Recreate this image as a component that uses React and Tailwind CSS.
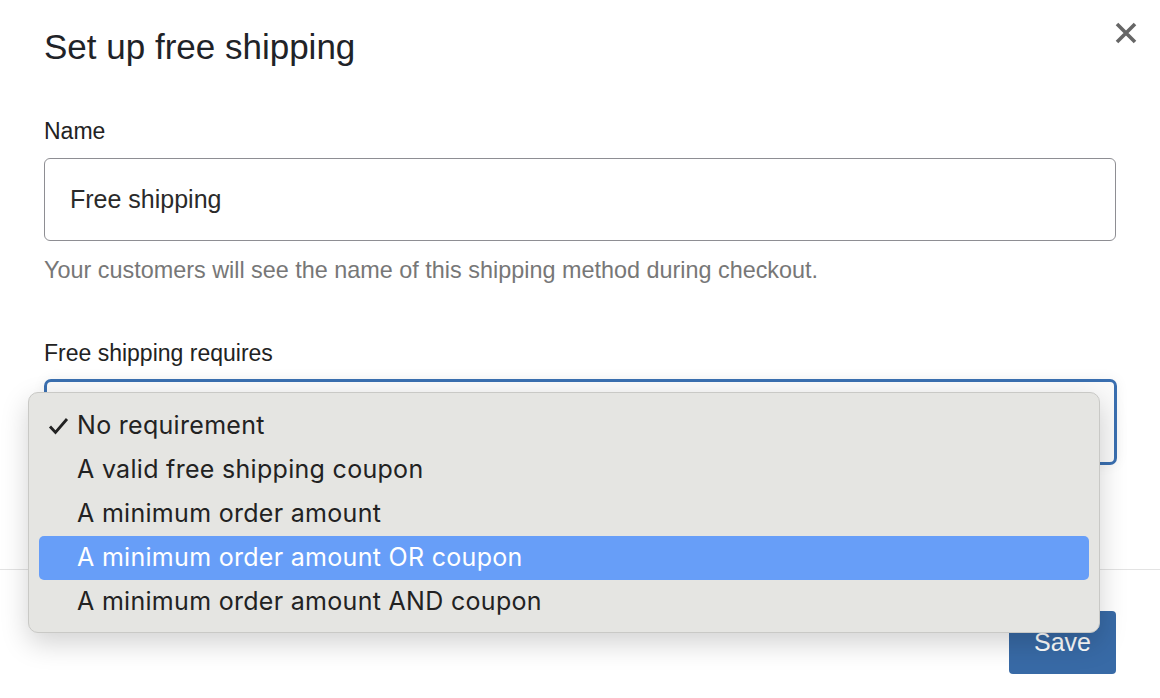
export default function App() {
  const options = [
    "No requirement",
    "A valid free shipping coupon",
    "A minimum order amount",
    "A minimum order amount OR coupon",
    "A minimum order amount AND coupon",
  ];
  const selected = 0;
  const highlighted = 3;

  return (
    <div className="relative w-[1160px] h-[698px] overflow-hidden bg-white font-['Liberation_Sans',Arial,sans-serif] text-[#222]">
      {/* header */}
      <div className="flex items-start justify-between pl-[44px] pr-[23px] pt-[27px]">
        <h1 className="text-[35px] leading-[40px] text-[#1f2328]">Set up free shipping</h1>
        <button className="mt-[-5px] p-0 text-[#666]">
          <svg width="22" height="22" viewBox="0 0 22 22">
            <path d="M2 2L20 20M20 2L2 20" stroke="#666" strokeWidth="3.6" strokeLinecap="butt" />
          </svg>
        </button>
      </div>

      {/* body */}
      <div className="px-[44px]">
        <label className="mt-[51px] block text-[23px] leading-[26px]">Name</label>
        <div className="mt-[14px] flex h-[83px] w-[1072px] items-center rounded-[6px] border-[1.5px] border-[#8e8e93] px-[25px] text-[25px] text-[#2a2a2a]">
          Free shipping
        </div>
        <p className="mt-[16px] text-[23.4px] leading-[26px] text-[#777]">
          Your customers will see the name of this shipping method during checkout.
        </p>

        <label className="mt-[57px] block text-[23px] leading-[26px]">Free shipping requires</label>
        <div className="mt-[13px] h-[86px] w-[1073px] rounded-[7px] border-[3px] border-[#3a6fb0] bg-[#fafafa] shadow-[0_0_14px_rgba(0,0,0,0.06)]" />
      </div>

      {/* footer */}
      <div className="mt-[104px] border-t border-[#e3e3e3] pt-[41px] pr-[44px] flex justify-end">
        <button className="h-[63px] w-[107px] rounded-[4px] bg-[#386aa6] text-[25px] text-white">Save</button>
      </div>

      {/* open select menu */}
      <div className="absolute left-[28px] top-[392px] w-[1072px] rounded-[10px] border border-[#c9c9c6] bg-[#e5e5e2] px-[10px] pt-[11px] pb-[8px] shadow-[0_10px_28px_rgba(0,0,0,0.18)] font-['Inter','Noto_Sans',sans-serif]">
        {options.map((o, i) => (
          <div
            key={o}
            className={
              i === highlighted
                ? "flex h-[44px] items-center rounded-[5px] bg-[#679ef8] text-[25px] tracking-[0.3px] text-white"
                : "flex h-[44px] items-center rounded-[5px] text-[25px] tracking-[0.3px] text-[#222]"
            }
          >
            <span className="flex w-[38px] justify-end pr-[8px]">
              {i === selected && (
                <svg width="21" height="18" viewBox="0 0 21 18">
                  <path d="M2 9.5L7.5 15.5L19 2" fill="none" stroke="#222" strokeWidth="2.8" />
                </svg>
              )}
            </span>
            <span>{o}</span>
          </div>
        ))}
      </div>
    </div>
  );
}
